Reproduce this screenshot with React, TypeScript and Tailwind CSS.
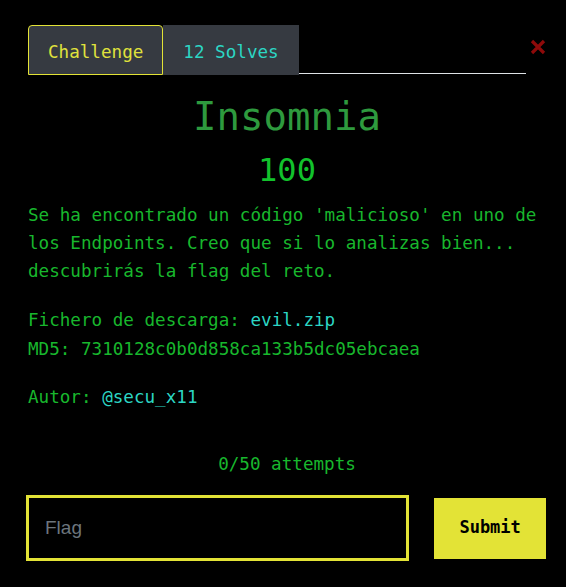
import React from "react";

const mono = { fontFamily: '"DejaVu Sans Mono", "Liberation Mono", monospace' };

export default function App() {
  return (
    <div
      className="w-[566px] h-[587px] bg-black pt-[25px] pl-[28px] pr-[20px] text-[17.6px] text-[#18b72d] overflow-hidden"
      style={mono}
    >
      <div className="flex items-start">
        <div className="flex flex-1 border-b border-[#dee2e6] h-[49px]">
          <div className="-mb-px h-[50px] flex items-center pt-[5px] px-[19px] bg-[#363a41] border border-[#e3e336] rounded-t-[4px] text-[#e0e23c]">
            Challenge
          </div>
          <div className="-mb-px h-[50px] flex items-center pt-[5px] px-[19px] bg-[#363a41] border border-transparent text-[#2cd6c4]">
            12 Solves
          </div>
        </div>
        <button className="ml-[4px] mt-[14px] w-[16px] h-[16px] flex items-center justify-center">
          <svg width="16" height="16" viewBox="0 0 16 16">
            <path d="M2 2 L14 14 M14 2 L2 14" stroke="#8e0a0a" strokeWidth="3.2" strokeLinecap="butt" />
          </svg>
        </button>
      </div>

      <div className="mt-[19px] text-center text-[39px] leading-[48px] text-[#2e9a3e]">Insomnia</div>
      <div className="mt-[10px] text-center text-[32px] leading-[38px] text-[#12c22c]">100</div>

      <p className="mt-[12px] leading-[28px]">
        Se ha encontrado un código 'malicioso' en uno de los Endpoints. Creo que si lo analizas bien... descubrirás la flag del reto.
      </p>

      <div className="mt-[21px] leading-[29px]">
        <div>
          Fichero de descarga: <span className="text-[#2cd6c4]">evil.zip</span>
        </div>
        <div>MD5: 7310128c0b0d858ca133b5dc05ebcaea</div>
      </div>

      <div className="mt-[19px] leading-[28px]">
        Autor: <span className="text-[#2cd6c4]">@secu_x11</span>
      </div>

      <div className="mt-[39px] text-center leading-[28px]">0/50 attempts</div>

      <div className="mt-[17px] -ml-[2px] flex items-center">
        <input
          placeholder="Flag"
          className="w-[384px] h-[66px] bg-black border-[3px] border-[#e3e336] pl-[16px] text-[19px] text-white placeholder:text-[#6c757d] outline-none"
          style={{ fontFamily: '"Liberation Sans", Arial, sans-serif' }}
        />
        <button className="ml-[25px] w-[112px] h-[61px] bg-[#e3e336] text-black font-bold text-[17px]">
          Submit
        </button>
      </div>
    </div>
  );
}
